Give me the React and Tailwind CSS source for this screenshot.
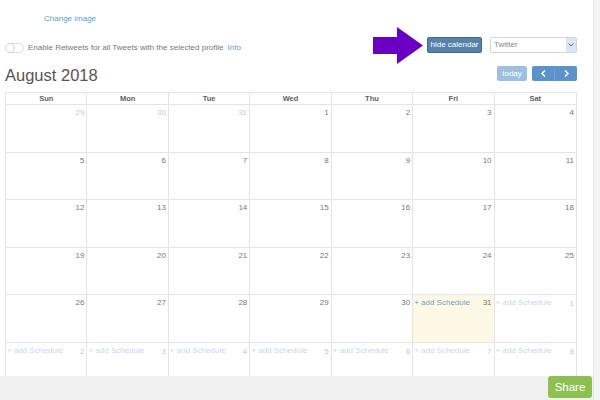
import React from "react";

const rows = [
  [[29, 1], [30, 1], [31, 1], [1, 0], [2, 0], [3, 0], [4, 0]],
  [[5, 0], [6, 0], [7, 0], [8, 0], [9, 0], [10, 0], [11, 0]],
  [[12, 0], [13, 0], [14, 0], [15, 0], [16, 0], [17, 0], [18, 0]],
  [[19, 0], [20, 0], [21, 0], [22, 0], [23, 0], [24, 0], [25, 0]],
  [[26, 0], [27, 0], [28, 0], [29, 0], [30, 0], [31, 2], [1, 3]],
  [[2, 3], [3, 3], [4, 3], [5, 3], [6, 3], [7, 3], [8, 3]],
];
// 0 normal, 1 other month past, 2 today with add, 3 future with add (light)

const days = ["Sun", "Mon", "Tue", "Wed", "Thu", "Fri", "Sat"];

function Cell({ n, t, last }) {
  const bg = t === 2 ? "bg-[#fcf8e3]" : "bg-white";
  const numColor = t === 1 || t === 3 ? "text-[#c8c8c8]" : "text-[#777]";
  return (
    <div
      className={`${bg} ${last ? "" : "border-r"} border-[#e4e4e4] flex items-start justify-between pl-[1px] pt-[3px] whitespace-nowrap overflow-hidden`}
    >
      <span
        className={`text-[8px] leading-[10px] ${
          t === 2 ? "text-[#6f9fd0]" : "text-[#c6d9ee]"
        }`}
      >
        {t >= 2 ? "+ add Schedule" : ""}
      </span>
      <span className={`text-[8px] leading-[10px] pr-[2px] ${numColor} ${t === 3 ? "mt-[1px]" : ""}`}>
        {n}
      </span>
    </div>
  );
}

export default function App() {
  return (
    <div
      className="w-[600px] h-[400px] flex bg-white overflow-hidden"
      style={{ fontFamily: '"Liberation Sans", Arial, sans-serif' }}
    >
      <div className="w-[593px] flex flex-col">
        <div className="h-[376px] overflow-hidden flex flex-col">
          <div className="pl-[44px] pt-[11px] h-[37px] shrink-0 leading-[10px]">
            <span className="text-[8px] leading-[10px] text-[#5b9bd5]">Change image</span>
          </div>
          <div className="flex justify-between h-[16px] pl-[5px] pr-[16px] shrink-0">
            <div className="flex items-center mt-[6px] h-[10px]">
              <div className="w-[19px] h-[10px] rounded-full border border-[#ddd] bg-white relative">
                <div className="absolute left-[-1px] top-[-1px] w-[10px] h-[10px] rounded-full border border-[#d6d6d6] bg-white" />
              </div>
              <span className="ml-[4px] text-[8px] text-[#777] leading-[10px] whitespace-nowrap">
                Enable Retweets for all Tweets with the selected profile
              </span>
              <span className="ml-[4px] text-[8px] text-[#5b9bd5] leading-[10px]">Info</span>
            </div>
            <div className="flex items-start">
              <div className="relative">
                <svg
                  className="absolute right-full mr-[4px] top-[-10px]"
                  width="50"
                  height="37"
                  viewBox="0 0 50 37"
                >
                  <polygon points="0,10 24,10 24,0 50,18.5 24,37 24,27 0,27" fill="#6a00c4" />
                </svg>
                <button className="h-[16px] w-[55px] rounded-[2px] bg-[#5581ab] border border-[#3f6a93] text-white text-[8px] leading-[12px] whitespace-nowrap flex items-center justify-center">
                  hide calendar
                </button>
              </div>
              <div className="ml-[8px] w-[87px] h-[16px] border border-[#d4d4d4] rounded-[2px] flex items-center justify-between bg-white">
                <span className="pl-[3px] text-[8px] text-[#888]">Twitter</span>
                <div className="w-[10px] h-[14px] bg-[#dce5f8] flex items-center justify-center">
                  <svg width="6" height="4" viewBox="0 0 6 4">
                    <path d="M0.5 0.5 L3 3 L5.5 0.5" stroke="#667" strokeWidth="1" fill="none" />
                  </svg>
                </div>
              </div>
            </div>
          </div>
          <div className="flex justify-between items-start pl-[5px] pr-[16px] mt-[13px] h-[26px] shrink-0">
            <span className="text-[16.5px] leading-[20px] text-[#555] -mt-[1px]">August 2018</span>
            <div className="flex">
              <button className="w-[30px] h-[15px] rounded-[2px] bg-[#9dc0e2] text-white text-[8px] leading-[12px]">
                today
              </button>
              <div className="ml-[5px] w-[45px] h-[15px] rounded-[2px] bg-[#5b92c9] flex text-white">
                <div className="flex-1 flex items-center justify-center border-r border-[#6fa0d0]">
                  <svg width="5" height="7" viewBox="0 0 5 7">
                    <path d="M4 0.5 L1 3.5 L4 6.5" stroke="white" strokeWidth="1.5" fill="none" />
                  </svg>
                </div>
                <div className="flex-1 flex items-center justify-center">
                  <svg width="5" height="7" viewBox="0 0 5 7">
                    <path d="M1 0.5 L4 3.5 L1 6.5" stroke="white" strokeWidth="1.5" fill="none" />
                  </svg>
                </div>
              </div>
            </div>
          </div>
          <div className="ml-[5px] w-[572px] border border-[#e4e4e4] shrink-0">
            <div className="grid grid-cols-7 h-[12px] border-b border-[#e4e4e4]">
              {days.map((d, i) => (
                <div
                  key={d}
                  className={`text-center text-[7.5px] leading-[11px] font-bold text-[#5f5f5f] ${i < 6 ? "border-r border-[#e4e4e4]" : ""}`}
                >
                  {d}
                </div>
              ))}
            </div>
            {rows.map((r, ri) => (
              <div key={ri} className="grid grid-cols-7 h-[47.6px] border-b border-[#e4e4e4]">
                {r.map(([n, t], ci) => (
                  <Cell key={ci} n={n} t={t} last={ci === 6} />
                ))}
              </div>
            ))}
          </div>
        </div>
        <div className="h-[24px] bg-[#f0f0f0] flex justify-end items-start pr-[1px] shrink-0">
          <button className="w-[44px] h-[22px] rounded-[3px] bg-[#8cc152] text-white text-[11.5px] leading-[22px]">
            Share
          </button>
        </div>
      </div>
      <div className="w-[7px] bg-[#f4f4f4] border-l border-[#e6e6e6]" />
    </div>
  );
}
